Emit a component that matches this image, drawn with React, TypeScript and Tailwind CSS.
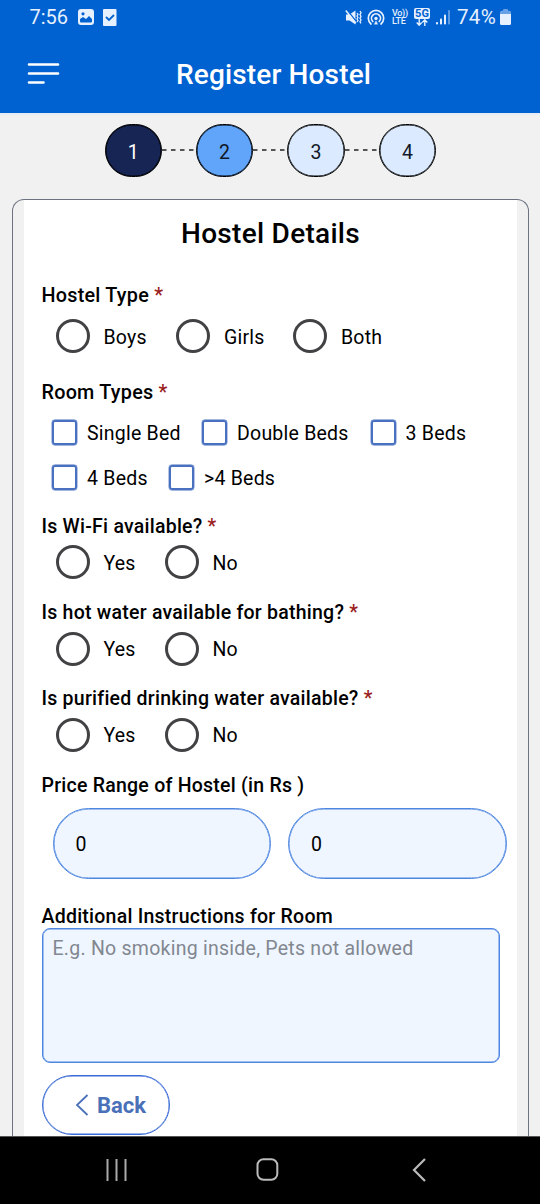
import { Fragment } from "react";
import type { ReactNode } from "react";

function Label({ children, required, className = "text-[19.5px]" }: { children: ReactNode; required?: boolean; className?: string }) {
  return (
    <div className={`h-6 shrink-0 pt-px whitespace-nowrap leading-6 font-medium tracking-[0.24px] text-black ${className}`}>
      {children}
      {required && <span className="text-[#9b1c1c]"> *</span>}
    </div>
  );
}

function Radio({ label, className }: { label: string; className: string }) {
  return (
    <label className={`flex shrink-0 items-center gap-3.5 ${className}`}>
      <span className="size-[34px] shrink-0 rounded-full border-[3px] border-[#424244]" />
      <span className="pt-[3px] text-[19.5px] leading-6 tracking-[0.2px]">{label}</span>
    </label>
  );
}

function Checkbox({ label, className }: { label: string; className: string }) {
  return (
    <label className={`flex shrink-0 items-center gap-2.5 ${className}`}>
      <span className="size-[25px] shrink-0 rounded-[3px] border-2 border-[#4a71c0] shadow-[0_0_0_0.4px_#4a71c0]" />
      <span className="whitespace-nowrap pt-0.5 text-[19.5px] leading-6 tracking-[0.23px]">{label}</span>
    </label>
  );
}

function YesNo({ className }: { className: string }) {
  return (
    <div className={`flex h-[34px] pl-3.5 ${className}`}>
      <Radio label="Yes" className="w-[109px]" />
      <Radio label="No" className="" />
    </div>
  );
}

function StatusBar() {
  return (
    <div className="flex h-[34px] items-center pr-[29px] pl-[29.500px] text-[#e6f0ff]">
      <span className="w-[41px] text-[20px] leading-6">7:56</span>
      <svg className="ml-[7px]" width="16" height="16" viewBox="0 0 16 16">
        <rect width="16" height="16" rx="3" fill="currentColor" />
        <path d="M2 12.500V10l3-2 3 2 3-3 3 3v2.500q0 1-1 1H3q-1 0-1-1Z" fill="#0062d1" />
        <circle cx="5" cy="4.800" r="1.600" fill="#0062d1" />
      </svg>
      <svg className="ml-2" width="15" height="17" viewBox="0 0 15 17">
        <rect x="1" width="13.500" height="17" rx="1" fill="currentColor" />
        <path d="m4 8 3 3 5-5" fill="none" stroke="#0062d1" strokeWidth="1.800" />
      </svg>
      <svg className="ml-auto" width="17" height="17" viewBox="0 0 17 17" fill="none" stroke="currentColor">
        <path d="M1 5.500h3.500L10.500 1.500v14l-6-4H1Z" fill="currentColor" stroke="none" />
        <path d="m2 1 10 12.500" stroke="#0062d1" strokeWidth="1.400" />
        <path d="m.8 1.500 10 12.500" strokeWidth="1.500" />
        <path d="M12 4l1 1.500-1 1.500 1 1.500-1 1.500 1 1.500-1 1.500M15 2l1 1.800-1 1.800 1 1.800-1 1.800 1 1.800-1 1.800 1 1.500" strokeWidth="1.300" />
      </svg>
      <svg className="ml-[5px]" width="18" height="17" viewBox="0 0 18 17" fill="none" stroke="currentColor" strokeWidth="1.700" strokeLinecap="round">
        <path d="M4 15a7.700 7.700 0 1 1 10 0" />
        <path d="M5.800 12.500a4.500 4.500 0 1 1 6.400 0" />
        <circle cx="9" cy="9.500" r="1.700" fill="currentColor" stroke="none" />
        <path d="m7.500 15 1.500-3 1.500 3Z" fill="currentColor" strokeWidth=".5" />
      </svg>
      <div className="ml-[7px] w-4 text-[9px] leading-2 font-medium">
        <div className="tracking-[-0.3px] whitespace-nowrap">Vo))</div>
        <div className="tracking-[-0.2px]">LTE</div>
      </div>
      <div className="-mt-px ml-1.5 flex w-4 flex-col items-center">
        <div className="h-[11px] w-4 rounded-[2px] bg-[#e6f0ff] text-center text-[11px] leading-[11px] font-bold text-[#0062d1]">5G</div>
        <svg width="12" height="7" viewBox="0 0 12 7" fill="none" stroke="currentColor" strokeWidth="1.400">
          <path d="M3.200 0v6M.7 3.500l2.500 2.700 2.500-2.700M8.800 7V1M6.300 3.500 8.800.8l2.500 2.700" />
        </svg>
      </div>
      <svg className="ml-1.5" width="15" height="15" viewBox="0 0 15 15" fill="currentColor">
        <rect x="0" y="12" width="2" height="2.500" rx=".8" />
        <rect x="4" y="8.500" width="2" height="6" rx=".8" />
        <rect x="8" y="4.500" width="2" height="10" rx=".8" />
        <rect x="12" y="0" width="2" height="14.500" rx=".8" opacity=".4" />
      </svg>
      <span className="ml-1.5 w-[40px] text-[20.5px] leading-6 tracking-[0.3px] whitespace-nowrap">74%</span>
      <svg className="ml-[3px]" width="11" height="16" viewBox="0 0 11 16" fill="currentColor">
        <path d="M3 1q0-1 1-1h3q1 0 1 1v.8h1.500q1.500 0 1.500 1.500V5H0V3.300q0-1.500 1.500-1.500H3Z" opacity=".45" />
        <path d="M0 5h11v9.500q0 1.500-1.500 1.500h-8Q0 16 0 14.500Z" />
      </svg>
    </div>
  );
}

const steps = [
  { n: 1, style: "bg-[#172554] text-white" },
  { n: 2, style: "bg-[#60a5fa] text-[#111827]" },
  { n: 3, style: "bg-[#dbeafe] text-[#111827]" },
  { n: 4, style: "bg-[#dbeafe] text-[#111827]" },
];

export default function App() {
  return (
    <div className="flex h-[1204px] w-[540px] flex-col overflow-hidden bg-[#f1f1f1] font-['Roboto',sans-serif] text-black">
      <header className="h-[113px] shrink-0 bg-[#0062d1]">
        <StatusBar />
        <div className="flex h-[79px] items-center pl-[27px]">
          <svg width="33" height="22" viewBox="0 0 33 22" stroke="white" strokeWidth="2.600" strokeLinecap="round">
            <path d="M2 1.500h29M2 10.500h29M2 19.500h14.500" />
          </svg>
          <h1 className="ml-[116px] pt-0.5 text-[28px] leading-8 font-medium tracking-[0.15px] whitespace-nowrap text-white">Register Hostel</h1>
        </div>
      </header>

      <div className="flex h-[86px] shrink-0 items-start border-t-2 border-[#e4ecf6] pt-[9px] pl-[104.500px]">
        {steps.map((s, i) => (
          <Fragment key={s.n}>
            {i > 0 && (
              <svg className="mt-[25px] shrink-0" width="34" height="2" viewBox="0 0 34 2">
                <path d="M0 1h34" stroke="#222" strokeWidth="1.600" strokeDasharray="4.500 4.500" />
              </svg>
            )}
            <div className={`flex h-[53px] w-[57.400px] shrink-0 items-center justify-center rounded-[27px] border border-black pt-1 text-[19.5px] shadow-[inset_0_0_0_0.5px_#000] ${s.style}`}>
              {s.n}
            </div>
          </Fragment>
        ))}
      </div>

      <main className="mr-[11px] ml-3 flex min-h-0 flex-1 flex-col overflow-hidden rounded-t-[12px] border border-b-0 border-[#6b7280] px-[11px]">
        <div className="flex-1 bg-white pl-[17.500px]">
          <h2 className="-ml-[17.500px] pt-[18px] text-center text-[28px] leading-8 font-medium tracking-[0.28px]">Hostel Details</h2>

          <Label required className="mt-[32.500px] text-[19.8px]">Hostel Type</Label>
          <div className="mt-[12.500px] flex h-[34px] pl-3.5">
            <Radio label="Boys" className="w-[120.500px]" />
            <Radio label="Girls" className="w-[117px]" />
            <Radio label="Both" className="" />
          </div>

          <Label required className="mt-[27px] text-[19.8px]">Room Types</Label>
          <div className="mt-4 flex h-[25px] pl-[10.500px]">
            <Checkbox label="Single Bed" className="w-[150px]" />
            <Checkbox label="Double Beds" className="w-[168.500px]" />
            <Checkbox label="3 Beds" className="" />
          </div>
          <div className="mt-5 flex h-[25px] pl-[10.500px]">
            <Checkbox label="4 Beds" className="w-[117px]" />
            <Checkbox label=">4 Beds" className="" />
          </div>

          <Label required className="mt-6 text-[19.5px]">Is Wi-Fi available?</Label>
          <YesNo className="mt-[7px]" />
          <Label required className="mt-[21px] text-[19.5px]">Is hot water available for bathing?</Label>
          <YesNo className="mt-[7.500px]" />
          <Label required className="mt-[20.500px] text-[19.5px]">Is purified drinking water available?</Label>
          <YesNo className="mt-[7.500px]" />

          <Label className="mt-[21px] text-[19.5px]">Price Range of Hostel (in Rs )</Label>
          <div className="mt-[11.500px] flex gap-[17px] pl-[11px]">
            {[0, 1].map((k) => (
              <div key={k} className="flex h-[71px] w-[218.500px] shrink-0 items-center rounded-full border border-[#4f86e0] bg-[#eff6ff] pt-[3px] pl-[22px] text-[19.5px] shadow-[inset_0_0_0_0.5px_#4f86e0]">
                0
              </div>
            ))}
          </div>

          <Label className="mt-[25px] text-[19.5px]">Additional Instructions for Room</Label>
          <div className="h-[135px] w-[458px] rounded-[8px] border border-[#4f86e0] bg-[#eff6ff] pt-2 pl-2.5 text-[19.5px] leading-6 tracking-[0.25px] whitespace-nowrap text-[#828790] shadow-[inset_0_0_0_0.5px_#4f86e0]">
            E.g. No smoking inside, Pets not allowed
          </div>
          <button className="mt-3 flex h-[60px] w-[128.500px] items-center rounded-full border border-[#3b6bd6] pl-8 text-[#4a71b8] shadow-[inset_0_0_0_0.4px_#3b6bd6]">
            <svg width="14" height="22" viewBox="0 0 14 22" fill="none" stroke="currentColor" strokeWidth="1.800">
              <path d="M12.500 1 2 11l10.500 10" />
            </svg>
            <span className="pt-0.5 pl-[8.500px] text-[22px] leading-7 font-bold">Back</span>
          </button>
        </div>
      </main>

      <nav className="flex h-[68px] shrink-0 items-center border-t border-[#555] bg-black pb-0.5 pl-[105px]">
        <svg width="22" height="22" viewBox="0 0 22 22" stroke="#aaa" strokeWidth="2">
          <path d="M2.500 0v22M11.500 0v22M20.500 0v22" />
        </svg>
        <svg className="ml-[129px]" width="23" height="23" viewBox="0 0 23 23" fill="none" stroke="#bbb" strokeWidth="2">
          <rect x="1.500" y="1.200" width="19.800" height="20.500" rx="6" />
        </svg>
        <svg className="ml-[133px]" width="15" height="24" viewBox="0 0 15 24" fill="none" stroke="#bbb" strokeWidth="2.200">
          <path d="M13 1 2 12l11 11" />
        </svg>
      </nav>
    </div>
  );
}
